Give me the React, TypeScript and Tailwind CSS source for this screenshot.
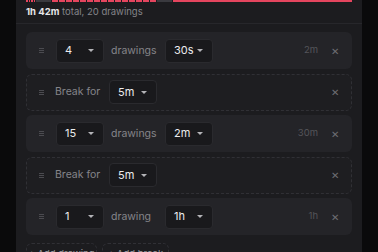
import React from 'react'

type Step =
  | { kind: 'draw'; count: number; each: string; total: string }
  | { kind: 'break'; length: string }

const steps: Step[] = [
  { kind: 'draw', count: 4, each: '30s', total: '2m' },
  { kind: 'break', length: '5m' },
  { kind: 'draw', count: 15, each: '2m', total: '30m' },
  { kind: 'break', length: '5m' },
  { kind: 'draw', count: 1, each: '1h', total: '1h' },
]

// minutes per segment on the timeline
const segments: { m: number; brk?: boolean }[] = [
  ...Array.from({ length: 4 }, () => ({ m: 0.5 })),
  { m: 5, brk: true },
  ...Array.from({ length: 15 }, () => ({ m: 2 })),
  { m: 5, brk: true },
  { m: 60 },
]

function Grip() {
  return (
    <div className="flex w-[5px] flex-col gap-[1px]">
      <span className="h-px bg-[#4b4b50]" />
      <span className="h-px bg-[#4b4b50]" />
      <span className="h-px bg-[#4b4b50]" />
    </div>
  )
}

function Select({ value }: { value: string }) {
  return (
    <div className="flex h-6 w-12 items-center justify-between rounded-[4px] border border-[#2a2a2e] bg-[#19191c] pl-2 pr-[9px] text-[11px] text-[#ececee]">
      <span>{value}</span>
      <span className="h-0 w-0 border-x-[3px] border-t-[3px] border-x-transparent border-t-[#b4b4b8]" />
    </div>
  )
}

function Close() {
  return <span className="text-[10px] leading-none text-[#6e6e73]">✕</span>
}

export default function App() {
  return (
    <div
      className="h-[252px] w-[378px] overflow-hidden bg-[#0a0a0b]"
      style={{ fontFamily: 'Inter, "Open Sans", sans-serif' }}
    >
      <div className="ml-4 h-full w-[346px] bg-[#1c1c1f]">
        <div className="px-[10px]">
          <div className="flex h-[2px] gap-px">
            {segments.map((s, i) => (
              <div
                key={i}
                className={s.brk ? 'bg-[#3a3a3f]' : 'bg-[#e5455e]'}
                style={{ flexGrow: s.m, flexBasis: 0 }}
              />
            ))}
          </div>
          <div className="mt-[4px] text-[9.5px] leading-[12px] text-[#85858a]">
            <span className="font-bold text-[#e6e6e8]">1h 42m</span> total, 20 drawings
          </div>
        </div>
        <div className="mt-[5px] h-px bg-[#27272b]" />
        <div className="flex flex-col gap-[4.5px] px-[10px] pt-2">
          {steps.map((s, i) =>
            s.kind === 'draw' ? (
              <div
                key={i}
                className="flex h-[37px] items-center rounded-md bg-[#242428] pl-[13px] pr-[13px]"
              >
                <Grip />
                <div className="ml-[12px]">
                  <Select value={String(s.count)} />
                </div>
                <span className="ml-[7px] w-[54px] text-[10.5px] text-[#85858a]">
                  {s.count === 1 ? 'drawing' : 'drawings'}
                </span>
                <Select value={s.each} />
                <span className="ml-auto mr-[13px] text-[9.5px] text-[#55555a]">{s.total}</span>
                <Close />
              </div>
            ) : (
              <div
                key={i}
                className="flex h-[37px] items-center rounded-md border border-dashed border-[#303035] bg-[#1e1e21] pl-[12px] pr-[12px]"
              >
                <Grip />
                <span className="ml-[11px] w-[54px] text-[10.5px] text-[#85858a]">Break for</span>
                <Select value={s.length} />
                <span className="ml-auto" />
                <Close />
              </div>
            )
          )}
          <div className="mt-[3px] flex gap-[5px]">
            <div className="flex h-6 w-[71px] items-center justify-center whitespace-nowrap rounded-md border border-dashed border-[#303035] text-[9.5px] text-[#9a9a9f]">
              + Add drawing
            </div>
            <div className="flex h-6 w-[67px] items-center justify-center whitespace-nowrap rounded-md border border-dashed border-[#303035] text-[9.5px] text-[#9a9a9f]">
              + Add break
            </div>
          </div>
        </div>
      </div>
    </div>
  )
}
